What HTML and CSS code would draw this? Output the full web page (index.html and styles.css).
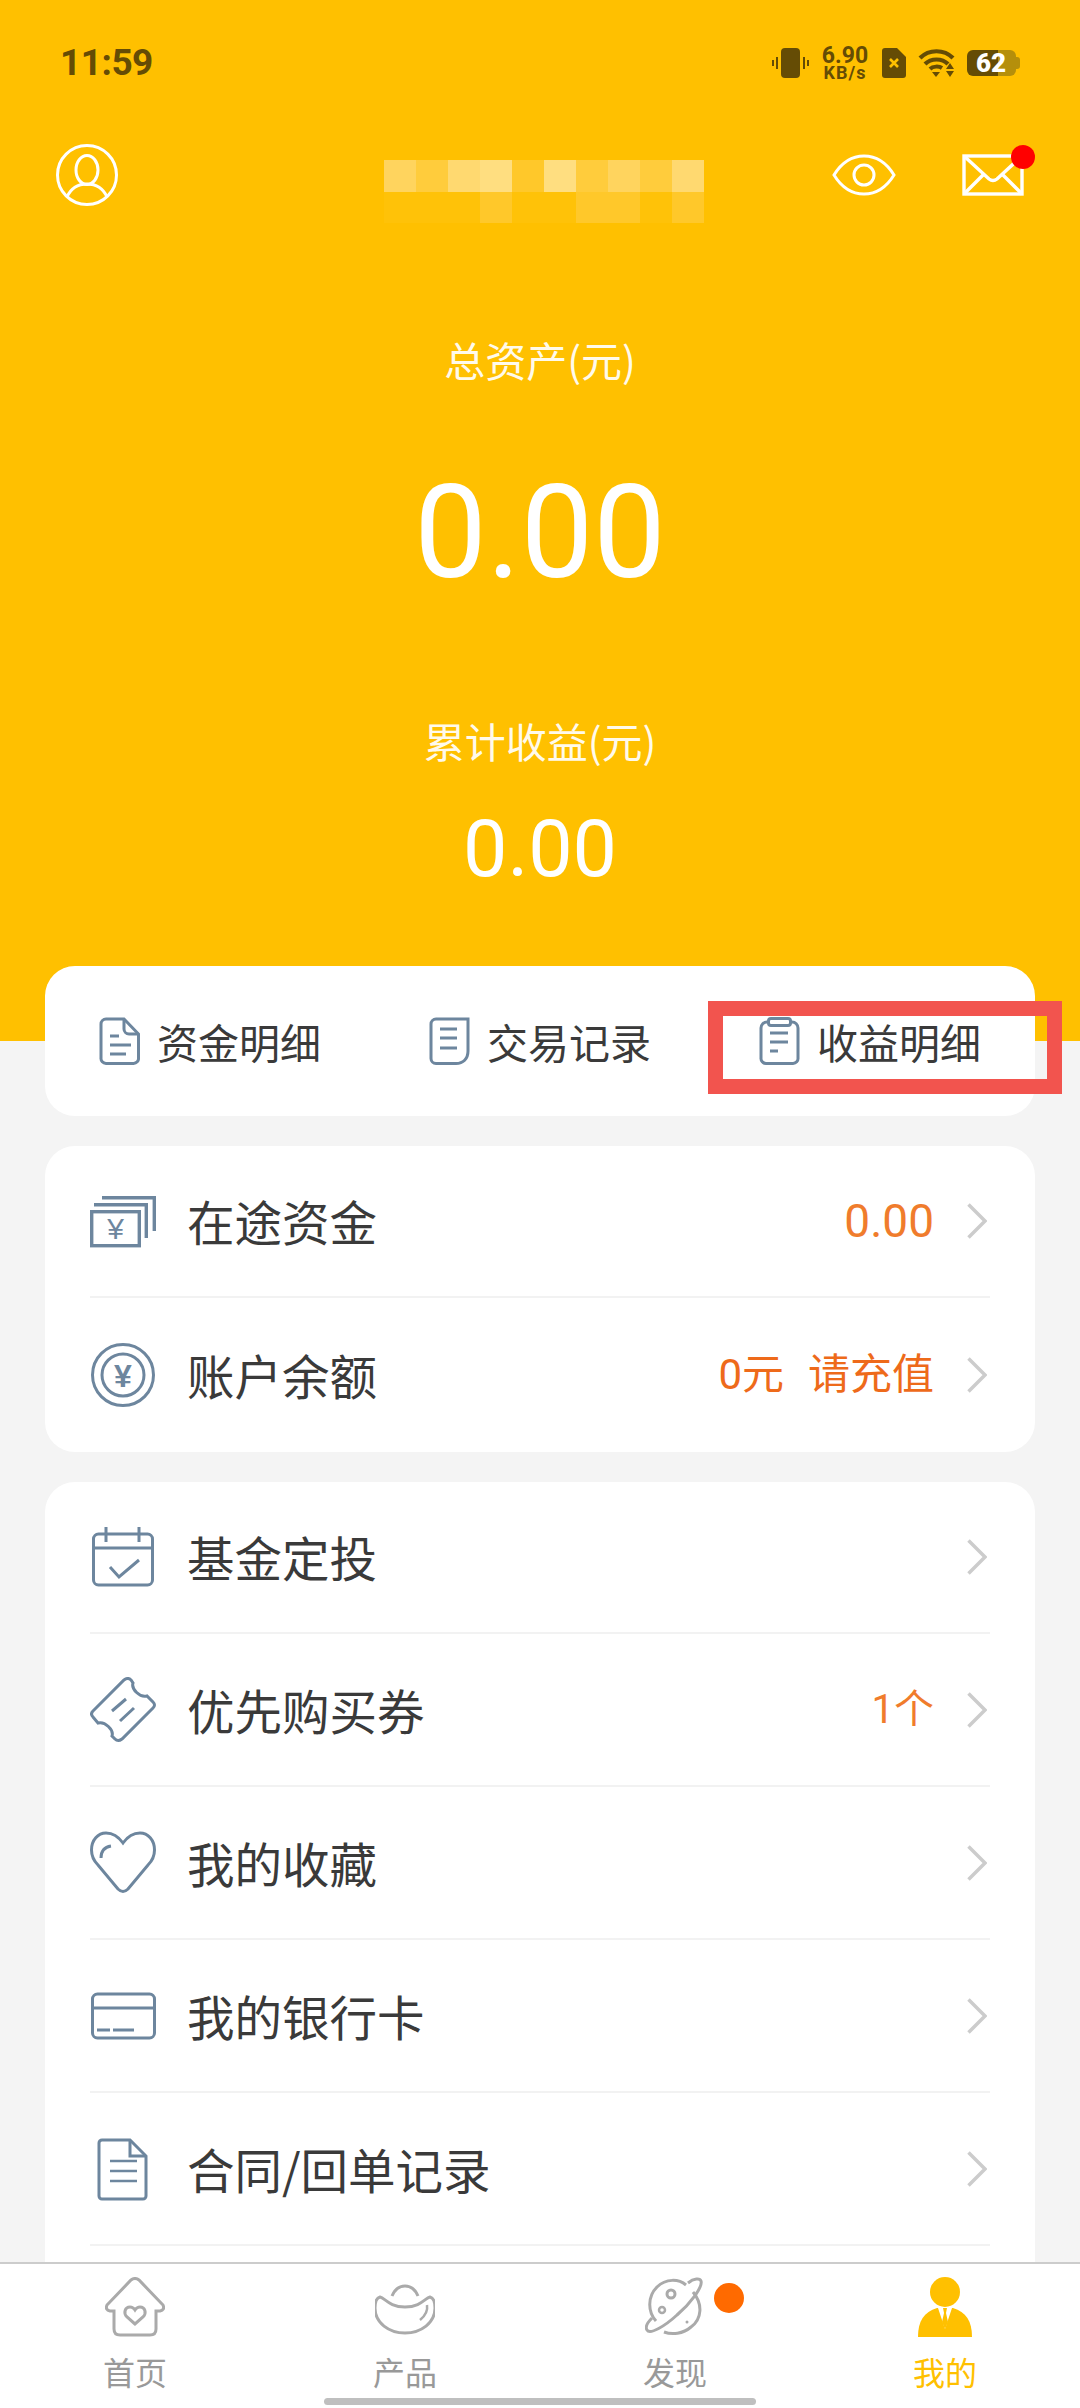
FILE: index.html
```html
<!DOCTYPE html>
<html lang="zh-CN">
<head>
    <meta charset="UTF-8">
    <title>我的</title>
    <link rel="stylesheet" href="styles.css">
</head>
<body>
    <div class="page">
        <header class="hero">
            <div class="status-bar">
                <span class="clock">11:59</span>
                <div class="status-icons">
                    <svg class="st-vibrate" viewBox="0 0 37 30" width="37" height="30">
                        <rect x="9" y="0" width="19" height="30" rx="4" fill="#654c05"/>
                        <path d="M5 9v12M1 12v6M32 9v12M36 12v6" stroke="#654c05" stroke-width="2" fill="none"/>
                    </svg>
                    <div class="speed">
                        <span class="speed-num">6.90</span>
                        <span class="speed-unit">KB/s</span>
                    </div>
                    <svg class="st-sim" viewBox="0 0 24 30" width="24" height="30">
                        <path d="M3 0H15L24 9V27a3 3 0 0 1-3 3H3a3 3 0 0 1-3-3V3a3 3 0 0 1 3-3z" fill="#654c05"/>
                        <path d="M8 11l8 8M16 11l-8 8" stroke="#ffc000" stroke-width="2.6"/>
                    </svg>
                    <svg class="st-wifi" viewBox="0 0 37 30" width="37" height="30">
                        <path d="M2 10C11 1 26 1 35 10" stroke="#654c05" stroke-width="4.2" fill="none"/>
                        <path d="M7 16C13 10 24 10 30 16" stroke="#654c05" stroke-width="4.2" fill="none"/>
                        <path d="M12 21C15 18 21 18 24 20" stroke="#654c05" stroke-width="4" fill="none"/>
                        <path d="M14 24H22L18 29z" fill="#654c05"/>
                        <path d="M32 15L36 21H28zM28 23H36L32 29z" fill="#654c05"/>
                    </svg>
                    <div class="battery">
                        <span class="battery-fill"></span>
                        <span class="battery-rest"></span>
                        <span class="battery-nub"></span>
                        <span class="battery-num">62</span>
                    </div>
                </div>
            </div>
            <div class="top-nav">
                <svg class="nav-user" viewBox="0 0 62 62" width="62" height="62" fill="none" stroke="#fff" stroke-width="3">
                    <circle cx="31" cy="31" r="29.5"/>
                    <ellipse cx="31" cy="26" rx="11" ry="14.5"/>
                    <path d="M11 53C15 44 22 40 31 40C40 40 47 44 51 53"/>
                </svg>
                <div class="mosaic">
                    <i class="m3"></i><i class="m2"></i><i class="m4"></i><i class="m5"></i><i class="m1"></i><i class="m5"></i><i class="m2"></i><i class="m3"></i><i class="m2"></i><i class="m4"></i>
                    <i class="m0"></i><i class="m0"></i><i class="m0"></i><i class="m1"></i><i class="m0"></i><i class="m0"></i><i class="m1"></i><i class="m1"></i><i class="m0"></i><i class="m1"></i>
                </div>
                <div class="nav-right">
                    <svg viewBox="0 0 64 42" width="64" height="42" fill="none" stroke="#fff" stroke-width="3">
                        <path d="M2 21C10 8 20 2 32 2C44 2 54 8 62 21C54 34 44 40 32 40C20 40 10 34 2 21z"/>
                        <circle cx="32" cy="21" r="10"/>
                    </svg>
                    <div class="mail">
                        <svg viewBox="0 0 62 42" width="62" height="42" fill="none" stroke="#fff" stroke-width="3.4">
                            <rect x="2" y="2" width="58" height="38"/>
                            <path d="M2 2L27 25Q31 28 35 25L60 2M2 40L22 20M60 40L40 20"/>
                        </svg>
                        <span class="mail-dot"></span>
                    </div>
                </div>
            </div>
            <div class="total-label">总资产(元)</div>
            <div class="total-num">0.00</div>
            <div class="profit-label">累计收益(元)</div>
            <div class="profit-num">0.00</div>
        </header>

        <main class="content">
            <section class="card shortcuts">
                <div class="shortcut">
                    <svg viewBox="0 0 41 48" width="41" height="48" fill="none" stroke="#6d869e" stroke-width="3">
                        <path d="M7 2H25L39.5 17V41a5 5 0 0 1-5 5.5H7a5 5 0 0 1-5-5.5V7a5 5 0 0 1 5-5z"/>
                        <path d="M25 2V12a5 5 0 0 0 5 5H39.5M11 19H20M11 28H32M11 37H27"/>
                    </svg>
                    <span>资金明细</span>
                </div>
                <div class="shortcut">
                    <svg viewBox="0 0 41 48" width="41" height="48" fill="none" stroke="#6d869e" stroke-width="3">
                        <path d="M7 2H39V34C39 42 34 46.5 27 46.5H7a5 5 0 0 1-5-5V7a5 5 0 0 1 5-5z"/>
                        <path d="M11 12H28M11 21H28M11 31H28"/>
                    </svg>
                    <span>交易记录</span>
                </div>
                <div class="shortcut">
                    <svg viewBox="0 0 41 48" width="41" height="48" fill="none" stroke="#6d869e" stroke-width="3">
                        <path d="M9 5H8a6 6 0 0 0-6 6V41a5 5 0 0 0 5 5.5H34a5 5 0 0 0 5-5.5V11a6 6 0 0 0-6-6H32"/>
                        <rect x="9.5" y="1.5" width="22" height="7" rx="2.5"/>
                        <path d="M11 16H29M11 25H29M11 34H19"/>
                    </svg>
                    <span>收益明细</span>
                </div>
            </section>

            <section class="card list">
                <div class="row">
                    <svg class="row-icon" viewBox="0 0 66 66" fill="none" stroke="#6d869e" stroke-width="3.4">
                        <rect x="1.7" y="23.7" width="47.6" height="34"/>
                        <path d="M4 16.7H56.3V50M12 9.7H64.3V43"/>
                        <text class="yen" x="25.5" y="51" text-anchor="middle">¥</text>
                    </svg>
                    <span class="row-label">在途资金</span>
                    <span class="row-value">0.00</span>
                    <svg class="chevron" viewBox="0 0 20 36"><path d="M1.5 1.5L18 18L1.5 34.5"/></svg>
                </div>
                <div class="row">
                    <svg class="row-icon" viewBox="0 0 66 66" fill="none" stroke="#6d869e" stroke-width="3">
                        <circle cx="33" cy="33" r="30.5"/>
                        <circle cx="33" cy="33" r="21"/>
                        <text class="yen yen-bold" x="33" y="45" text-anchor="middle">¥</text>
                    </svg>
                    <span class="row-label">账户余额</span>
                    <span class="row-value strong">0元</span>
                    <span class="row-value strong recharge">请充值</span>
                    <svg class="chevron" viewBox="0 0 20 36"><path d="M1.5 1.5L18 18L1.5 34.5"/></svg>
                </div>
            </section>

            <section class="card list">
                <div class="row">
                    <svg class="row-icon" viewBox="0 0 66 66" fill="none" stroke="#6d869e" stroke-width="3">
                        <rect x="3.5" y="10" width="59" height="51" rx="5"/>
                        <path d="M3.5 24H62.5M16 3V18M49 3V18"/>
                        <path d="M20 43L29 53L49 36"/>
                    </svg>
                    <span class="row-label">基金定投</span>
                    <svg class="chevron" viewBox="0 0 20 36"><path d="M1.5 1.5L18 18L1.5 34.5"/></svg>
                </div>
                <div class="row">
                    <svg class="row-icon" viewBox="0 0 66 66" fill="none" stroke="#6d869e" stroke-width="3">
                        <path d="M3 34L34 3Q38 0 41 3L43 6C41 12 50 21 57 19L63 25Q66 28 63 31L32 62Q28 65 25 62L22 59C24 53 15 44 8 46L3 40Q0 37 3 34z"/>
                        <path d="M22 34L36 22M30 44L44 31"/>
                    </svg>
                    <span class="row-label">优先购买券</span>
                    <span class="row-value count">1个</span>
                    <svg class="chevron" viewBox="0 0 20 36"><path d="M1.5 1.5L18 18L1.5 34.5"/></svg>
                </div>
                <div class="row">
                    <svg class="row-icon" viewBox="0 0 66 66" fill="none" stroke="#6d869e" stroke-width="3">
                        <path d="M33 13C28 6 22 3 16 3C8 3 1.5 10 1.5 20C1.5 27 4 31 8 35L28 59Q33 64 38 59L58 35C62 31 64.5 27 64.5 20C64.5 10 58 3 50 3C44 3 38 6 33 13z"/>
                        <path d="M11 28C11 21 15 17 21 16"/>
                    </svg>
                    <span class="row-label">我的收藏</span>
                    <svg class="chevron" viewBox="0 0 20 36"><path d="M1.5 1.5L18 18L1.5 34.5"/></svg>
                </div>
                <div class="row">
                    <svg class="row-icon" viewBox="0 0 66 66" fill="none" stroke="#6d869e" stroke-width="3">
                        <rect x="2.5" y="11" width="62" height="44" rx="5"/>
                        <path d="M2.5 25H64.5M7 47H20M23 47H44"/>
                    </svg>
                    <span class="row-label">我的银行卡</span>
                    <svg class="chevron" viewBox="0 0 20 36"><path d="M1.5 1.5L18 18L1.5 34.5"/></svg>
                </div>
                <div class="row">
                    <svg class="row-icon" viewBox="0 0 66 66" fill="none" stroke="#6d869e" stroke-width="3">
                        <path d="M12 4H40L56 20V60a3 3 0 0 1-3 3H12a3 3 0 0 1-3-3V7a3 3 0 0 1 3-3z"/>
                        <path d="M40 4V20H56"/>
                        <path d="M20 25H47M20 35H47M20 45H47" stroke-width="2.5"/>
                    </svg>
                    <span class="row-label">合同/回单记录</span>
                    <svg class="chevron" viewBox="0 0 20 36"><path d="M1.5 1.5L18 18L1.5 34.5"/></svg>
                </div>
            </section>
        </main>

        <div class="red-frame"></div>

        <nav class="tabbar">
            <div class="tab">
                <svg viewBox="0 0 60 60" width="60" height="60" fill="none" stroke="#aaa" stroke-width="3">
                    <path d="M9 34H5Q0 33 2 28L26 3Q30 0 34 3L58 28Q60 33 55 34H51V52Q51 58 45 58H15Q9 58 9 52z"/>
                    <path d="M30 47L22 40C18 36 20 30 25 30Q28 30 30 33Q32 30 35 30C40 30 42 36 38 40z"/>
                </svg>
                <span>首页</span>
            </div>
            <div class="tab">
                <svg viewBox="0 0 60 60" width="60" height="60" fill="none" stroke="#aaa" stroke-width="3">
                    <path d="M17 19C20 12 25 9 30 9C35 9 40 12 43 19"/>
                    <path d="M5 20C10 21 14 30 30 30C46 30 50 21 55 20C59 21 60 26 60 31C60 46 46 56 30 56C14 56 0 46 0 31C0 26 1 21 5 20z"/>
                    <path d="M52 28C53 34 50 39 45 43" stroke-width="2.5"/>
                </svg>
                <span>产品</span>
            </div>
            <div class="tab">
                <div class="tab-icon">
                    <svg viewBox="0 0 60 60" width="60" height="60" fill="none" stroke="#aaa" stroke-width="3">
                        <path d="M41 8C34 2 21 1 12 10C2 20 3 35 11 44M48 15C58 27 57 42 46 50C38 57 27 58 19 55"/>
                        <path d="M43 6C49 1 55 1 56 4C58 10 45 27 32 38C20 49 5 58 2 53C0 50 3 45 7 41"/>
                        <circle cx="26" cy="17" r="4"/>
                        <circle cx="17" cy="33" r="3" stroke-width="2.5"/>
                        <circle cx="42" cy="45" r="1.5" fill="#aaa" stroke="none"/>
                    </svg>
                    <span class="tab-dot"></span>
                </div>
                <span>发现</span>
            </div>
            <div class="tab active">
                <svg viewBox="0 0 60 60" width="60" height="60">
                    <circle cx="30" cy="15" r="15" fill="#ffc000"/>
                    <path d="M3 60C3 44 9 35 22 31H38C51 35 57 44 57 60z" fill="#ffc000"/>
                    <path d="M23 31L30 52L37 31z" fill="#fff"/>
                    <path d="M28 31H32L31 36L33 45L30 52L27 45L29 36z" fill="#ffc000"/>
                </svg>
                <span>我的</span>
            </div>
        </nav>
        <div class="home-bar"></div>
    </div>
</body>
</html>
```

FILE: styles.css
```css
* {
    box-sizing: border-box;
}
html, body {
    margin: 0;
    padding: 0;
}
body {
    font-family: "Noto Sans CJK SC", "Noto Sans", sans-serif;
    background: #f4f4f4;
    color: #3a3a3a;
}
.page {
    position: relative;
    width: 1080px;
    height: 2408px;
    overflow: hidden;
}

/* 顶部黄色区域 */
.hero {
    height: 1041px;
    background: #ffc000;
    color: #fff;
    text-align: center;
}
.status-bar {
    height: 126px;
    display: flex;
    align-items: center;
    justify-content: space-between;
    padding: 0 60px;
    color: #654c05;
}
.clock {
    font-family: "Roboto", sans-serif;
    font-weight: 700;
    font-size: 37px;
    line-height: 44px;
    letter-spacing: -0.5px;
}
.status-icons {
    display: flex;
    align-items: center;
}
.speed {
    display: flex;
    flex-direction: column;
    align-items: center;
    width: 48px;
    margin: 0 13px 0 12px;
    font-family: "Roboto", sans-serif;
    font-weight: 700;
}
.speed-num {
    font-size: 23px;
    line-height: 19px;
}
.speed-unit {
    font-size: 18px;
    line-height: 15px;
    letter-spacing: 1px;
}
.st-wifi {
    margin: 0 12px;
}
.battery {
    position: relative;
    display: flex;
    align-items: center;
    width: 53px;
    height: 26px;
}
.battery-fill {
    width: 31px;
    height: 26px;
    border-radius: 6px 0 0 6px;
    background: #654c05;
}
.battery-rest {
    width: 18px;
    height: 26px;
    border-radius: 0 6px 6px 0;
    background: #b58f0b;
}
.battery-nub {
    width: 4px;
    height: 12px;
    border-radius: 0 3px 3px 0;
    background: #b58f0b;
}
.battery-num {
    position: absolute;
    left: 0;
    top: -2px;
    width: 48px;
    text-align: center;
    font-family: "Roboto", sans-serif;
    font-weight: 900;
    font-size: 26px;
    line-height: 30px;
    color: #fff;
}

.top-nav {
    height: 98px;
    display: flex;
    align-items: center;
    padding: 0 56px;
}
.mosaic {
    align-self: flex-end;
    margin: 0 0 1px 266px;
    width: 320px;
    height: 63px;
    display: grid;
    grid-template-columns: repeat(10, 32px);
    grid-template-rows: 32px 31px;
}
.m0 { background: #ffc208; }
.m1 { background: #ffc82a; }
.m2 { background: #ffcc3c; }
.m3 { background: #ffd45e; }
.m4 { background: #ffd970; }
.m5 { background: #ffde80; }
.nav-right {
    display: flex;
    align-items: center;
    gap: 66px;
    margin-left: auto;
}
.mail {
    position: relative;
    width: 62px;
    height: 42px;
}
.mail-dot {
    position: absolute;
    right: -11px;
    top: -9px;
    width: 24px;
    height: 24px;
    border-radius: 50%;
    background: #f00;
}

.total-label, .profit-label {
    height: 60px;
    font-size: 41px;
    line-height: 60px;
    opacity: 0.92;
}
.total-label {
    margin-top: 105px;
}
.total-num {
    margin-top: 74px;
    height: 140px;
    font-family: "Roboto", sans-serif;
    font-size: 129px;
    line-height: 140px;
}
.profit-label {
    margin-top: 107px;
}
.profit-num {
    margin-top: 34px;
    height: 90px;
    font-family: "Roboto", sans-serif;
    font-size: 79px;
    line-height: 90px;
}

/* 卡片 */
.content {
    position: relative;
    margin-top: -75px;
    padding: 0 45px;
}
.card {
    background: #fff;
    border-radius: 30px;
    margin-bottom: 30px;
}
.shortcuts {
    height: 150px;
    display: flex;
}
.shortcut {
    flex: 1;
    display: flex;
    align-items: center;
    justify-content: center;
    gap: 17px;
    font-size: 41px;
    color: #3a3a3a;
}
.list {
    padding: 0 45px;
}
.row {
    height: 153px;
    display: flex;
    align-items: center;
    border-bottom: 2px solid #f2f2f2;
    padding-right: 3px;
}
.row:first-child {
    height: 152px;
}
.row:last-child:nth-child(2) {
    height: 154px;
    border-bottom: none;
}
.row-icon {
    width: 66px;
    height: 66px;
    flex-shrink: 0;
}
.yen {
    font-family: "Liberation Sans", sans-serif;
    font-size: 30px;
    fill: #6d869e;
    stroke: none;
}
.yen-bold {
    font-weight: 700;
    font-size: 32px;
}
.row-label {
    margin-left: 31px;
    font-size: 47.5px;
    line-height: 66px;
    color: #3a3a3a;
    flex: 1;
}
.row-value {
    font-family: "Roboto", "Noto Sans CJK SC", sans-serif;
    font-size: 46px;
    line-height: 60px;
    color: #f07c2c;
}
.row-value.strong {
    font-size: 42px;
    color: #ee6a1a;
}
.row-value.count {
    font-size: 40px;
}
.recharge {
    margin-left: 24px;
}
.chevron {
    width: 20px;
    height: 36px;
    margin-left: 33px;
    fill: none;
    stroke: #cccccc;
    stroke-width: 3.5;
}
.list:last-child {
    padding-bottom: 60px;
}

.red-frame {
    position: absolute;
    left: 708px;
    top: 1001px;
    width: 354px;
    height: 93px;
    border: 15px solid #f2544e;
}

/* 底部导航 */
.tabbar {
    position: absolute;
    left: 0;
    right: 0;
    bottom: 0;
    height: 146px;
    display: flex;
    background: #fff;
    border-top: 2px solid #cccccc;
}
.tab {
    flex: 1;
    display: flex;
    flex-direction: column;
    align-items: center;
    padding-top: 13px;
    font-size: 32px;
    line-height: 44px;
    color: #999;
}
.tab > svg, .tab-icon {
    margin-bottom: 12px;
}
.tab-icon {
    position: relative;
    width: 60px;
    height: 60px;
}
.tab-dot {
    position: absolute;
    left: 69px;
    top: 6px;
    width: 30px;
    height: 30px;
    border-radius: 50%;
    background: #ff6a00;
}
.tab.active {
    color: #ffc000;
}
.home-bar {
    position: absolute;
    left: 324px;
    top: 2398px;
    width: 432px;
    height: 7px;
    border-radius: 4px;
    background: #bfbfbf;
}
```
